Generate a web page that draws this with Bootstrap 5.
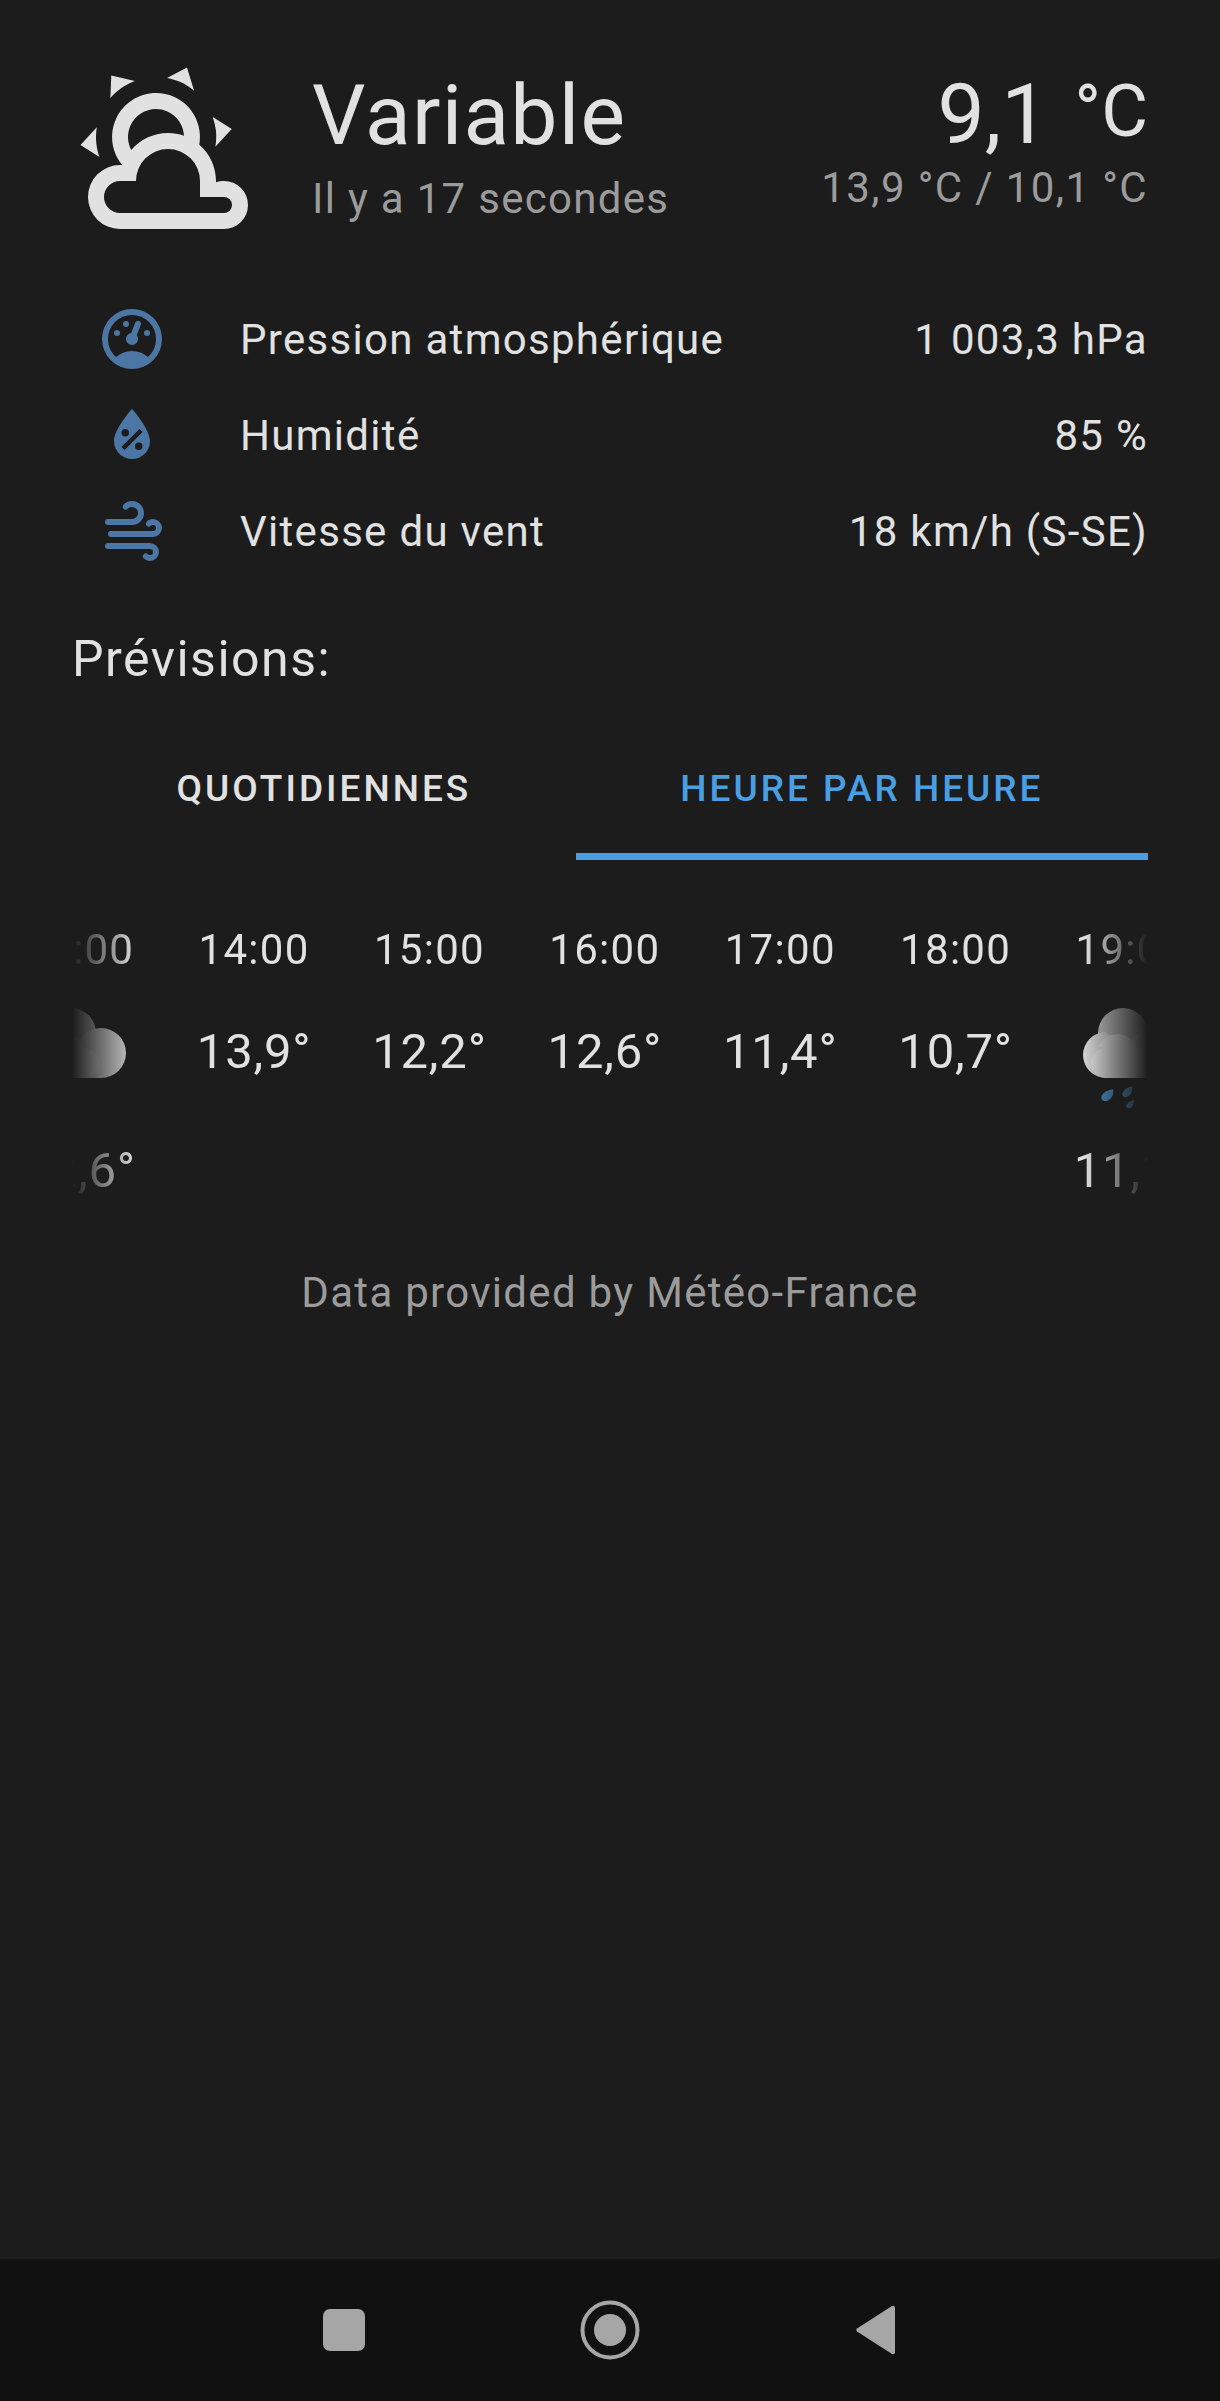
<!DOCTYPE html>
<html lang="fr">
<head>
  <meta charset="UTF-8" />
  <meta name="viewport" content="width=device-width, initial-scale=1.0">
  <title>Météo</title>
  <link href="https://cdn.jsdelivr.net/npm/bootstrap@5.3.3/dist/css/bootstrap.min.css" rel="stylesheet" />
  <style>
    body {
      background: #1c1c1c;
      color: #e1e1e1;
      font-family: Roboto, "Liberation Sans", sans-serif;
      min-height: 100vh;
    }

    .wx-head {
      padding: 53px 72px 0;
    }

    .wx-head-icon {
      width: 192px;
      height: 192px;
      fill: #e1e1e1;
      flex-shrink: 0;
      margin-right: 48px;
    }

    .wx-title {
      font-size: 84px;
      line-height: 88px;
      margin-top: 19px;
      letter-spacing: 1.3px;
    }

    .wx-temp {
      font-size: 84px;
      line-height: 88px;
      margin-top: 18px;
    }

    .wx-unit {
      font-size: 72px;
      line-height: 1;
      vertical-align: 7px;
      margin-left: 5px;
    }

    .wx-sub {
      font-size: 42px;
      line-height: 56px;
      color: #9b9b9b;
      letter-spacing: 1.3px;
      margin-top: 11px;
    }

    .wx-range {
      font-size: 42px;
      line-height: 56px;
      color: #9b9b9b;
      letter-spacing: 1.38px;
      margin-top: 1px;
    }

    .wx-attrs {
      padding: 46px 72px 0 96px;
    }

    .wx-attr {
      height: 96px;
      font-size: 42px;
      letter-spacing: 1.3px;
    }

    .wx-attr svg {
      width: 72px;
      height: 72px;
      fill: #4c76a4;
      margin-right: 72px;
    }

    .wx-forecast-title {
      font-size: 50px;
      line-height: 60px;
      margin: 50px 72px 0;
      letter-spacing: 1.5px;
    }

    .wx-tabs {
      margin: 40px 72px 0;
    }

    .wx-tabs .nav-link {
      height: 131px;
      line-height: 119px;
      padding: 0;
      font-size: 37px;
      font-weight: 500;
      letter-spacing: 3px;
      color: #e1e1e1;
      text-transform: uppercase;
      border-bottom: 7px solid transparent;
    }

    .wx-tabs .nav-link.active {
      color: #4a9fe3;
      border-bottom-color: #4a9fe3;
    }

    .wx-hours {
      margin: 62px 72px 0;
      overflow: hidden;
      -webkit-mask-image: linear-gradient(90deg, transparent 0, #000 64px, #000 1012px, transparent 100%);
      mask-image: linear-gradient(90deg, transparent 0, #000 64px, #000 1012px, transparent 100%);
    }

    .wx-strip {
      margin-left: -81px;
      width: 1228px;
    }

    .wx-hour {
      flex: 0 0 175.4px;
      text-align: center;
    }

    .wx-hour-time {
      font-size: 42px;
      line-height: 56px;
      letter-spacing: 1.3px;
    }

    .wx-hour-temp {
      font-size: 49px;
      line-height: 60px;
      letter-spacing: 0.8px;
      margin-top: 44px;
    }

    .wx-hour-icon {
      display: block;
      width: 96px;
      height: 102px;
      margin: 30px auto 0;
    }

    .wx-hour-icon + .wx-hour-temp {
      margin-top: 31px;
    }

    .wx-credit {
      font-size: 42px;
      line-height: 56px;
      letter-spacing: 1.3px;
      color: #9b9b9b;
      margin-top: 64px;
    }

    .wx-sysbar {
      height: 142px;
      background: #111111;
      gap: 206px;
    }

    .wx-sysbar svg {
      width: 60px;
      height: 60px;
      fill: #a6a6a6;
    }
  </style>
</head>
<body class="d-flex flex-column">

  <!-- current conditions -->
  <div class="wx-head d-flex">
    <svg class="wx-head-icon" viewBox="0 0 24 24"><path d="M12.74,5.47C15.1,6.5 16.35,9.03 15.92,11.46C17.19,12.56 18,14.19 18,16V16.17C18.31,16.06 18.65,16 19,16A3,3 0 0,1 22,19A3,3 0 0,1 19,22H6A4,4 0 0,1 2,18A4,4 0 0,1 6,14H6.27C5,12.45 4.6,10.24 5.5,8.26C6.72,5.5 9.97,4.24 12.74,5.47M11.93,7.3C10.16,6.5 8.09,7.31 7.31,9.07C6.85,10.09 6.93,11.22 7.41,12.13C8.5,10.83 10.16,10 12,10C12.7,10 13.38,10.12 14,10.34C13.94,9.06 13.18,7.86 11.93,7.3M13.55,3.64C13,3.4 12.45,3.23 11.88,3.12L14.37,1.82L15.27,4.71C14.76,4.29 14.19,3.93 13.55,3.64M6.09,4.44C5.6,4.79 5.17,5.19 4.8,5.63L4.91,2.82L7.87,3.5C7.25,3.71 6.65,4.03 6.09,4.44M18,9.71C17.91,9.12 17.78,8.55 17.59,8L19.97,9.5L17.92,11.73C18.03,11.08 18.05,10.4 18,9.71M3.04,11.3C3.11,11.9 3.24,12.47 3.43,13L1.06,11.5L3.1,9.28C3,9.93 2.97,10.61 3.04,11.3M19,18H16V16A4,4 0 0,0 12,12A4,4 0 0,0 8,16H6A2,2 0 0,0 4,18A2,2 0 0,0 6,20H19A1,1 0 0,0 20,19A1,1 0 0,0 19,18Z"/></svg>
    <div class="flex-grow-1">
      <div class="wx-title">Variable</div>
      <div class="wx-sub">Il y a 17 secondes</div>
    </div>
    <div class="text-end">
      <div class="wx-temp">9,1 <span class="wx-unit">°C</span></div>
      <div class="wx-range">13,9 °C / 10,1 °C</div>
    </div>
  </div>

  <!-- attributes -->
  <div class="wx-attrs">
    <div class="wx-attr d-flex align-items-center">
      <svg viewBox="0 0 24 24"><path d="M12,2A10,10 0 0,0 2,12A10,10 0 0,0 12,22A10,10 0 0,0 22,12A10,10 0 0,0 12,2M12,4A8,8 0 0,1 20,12C20,14.4 19,16.5 17.3,18C15.9,16.7 14,16 12,16C10,16 8.2,16.7 6.7,18C5,16.5 4,14.4 4,12A8,8 0 0,1 12,4M14,5.89C13.62,5.9 13.26,6.15 13.1,6.54L11.81,9.77L11.71,10C11,10.13 10.41,10.6 10.14,11.26C9.73,12.29 10.23,13.45 11.26,13.86C12.29,14.27 13.45,13.77 13.86,12.74C14.12,12.08 14,11.32 13.57,10.76L13.67,10.5L14.96,7.29L14.97,7.26C15.17,6.75 14.92,6.17 14.41,5.96C14.28,5.91 14.15,5.89 14,5.89M10,6A1,1 0 0,0 9,7A1,1 0 0,0 10,8A1,1 0 0,0 11,7A1,1 0 0,0 10,6M7,9A1,1 0 0,0 6,10A1,1 0 0,0 7,11A1,1 0 0,0 8,10A1,1 0 0,0 7,9M17,9A1,1 0 0,0 16,10A1,1 0 0,0 17,11A1,1 0 0,0 18,10A1,1 0 0,0 17,9Z"/></svg>
      <span class="flex-grow-1">Pression atmosphérique</span>
      <span>1 003,3 hPa</span>
    </div>
    <div class="wx-attr d-flex align-items-center">
      <svg viewBox="0 0 24 24"><path d="M12,3.25C12,3.25 6,10 6,14C6,17.32 8.69,20 12,20A6,6 0 0,0 18,14C18,10 12,3.25 12,3.25M14.47,9.97L15.53,11.03L9.53,17.03L8.47,15.97M9.75,10A1.25,1.25 0 0,1 11,11.25A1.25,1.25 0 0,1 9.75,12.5A1.25,1.25 0 0,1 8.5,11.25A1.25,1.25 0 0,1 9.75,10M14.25,14.5A1.25,1.25 0 0,1 15.5,15.75A1.25,1.25 0 0,1 14.25,17A1.25,1.25 0 0,1 13,15.75A1.25,1.25 0 0,1 14.25,14.5Z"/></svg>
      <span class="flex-grow-1">Humidité</span>
      <span>85 %</span>
    </div>
    <div class="wx-attr d-flex align-items-center">
      <svg viewBox="0 0 24 24"><path d="M4,10A1,1 0 0,1 3,9A1,1 0 0,1 4,8H12A2,2 0 0,0 14,6A2,2 0 0,0 12,4C11.45,4 10.95,4.22 10.59,4.59C10.2,5 9.56,5 9.17,4.59C8.78,4.2 8.78,3.56 9.17,3.17C9.9,2.45 10.9,2 12,2A4,4 0 0,1 16,6A4,4 0 0,1 12,10H4M19,12A1,1 0 0,0 20,11A1,1 0 0,0 19,10C18.72,10 18.47,10.11 18.29,10.29C17.9,10.68 17.27,10.68 16.88,10.29C16.5,9.9 16.5,9.27 16.88,8.88C17.42,8.34 18.17,8 19,8A3,3 0 0,1 22,11A3,3 0 0,1 19,14H5A1,1 0 0,1 4,13A1,1 0 0,1 5,12H19M18,18H4A1,1 0 0,1 3,17A1,1 0 0,1 4,16H18A3,3 0 0,1 21,19A3,3 0 0,1 18,22C17.17,22 16.42,21.66 15.88,21.12C15.5,20.73 15.5,20.1 15.88,19.71C16.27,19.32 16.9,19.32 17.29,19.71C17.47,19.89 17.72,20 18,20A1,1 0 0,0 19,19A1,1 0 0,0 18,18Z"/></svg>
      <span class="flex-grow-1">Vitesse du vent</span>
      <span>18 km/h (S-SE)</span>
    </div>
  </div>

  <div class="wx-forecast-title">Prévisions:</div>

  <ul class="nav nav-fill wx-tabs">
    <li class="nav-item"><a class="nav-link" href="#">Quotidiennes</a></li>
    <li class="nav-item"><a class="nav-link active" href="#">Heure par heure</a></li>
  </ul>

  <!-- hourly strip, scrolled a bit so both ends are cut off -->
  <div class="wx-hours">
    <div class="wx-strip d-flex">
      <div class="wx-hour">
        <div class="wx-hour-time">13:00</div>
        <svg class="wx-hour-icon" viewBox="0 0 96 102">
          <circle cx="40" cy="25" r="25" fill="#bcbcbc"/>
          <path fill="#d2d2d2" d="M23,24a23,23 0 0,0 0,46H70a25,25 0 0,0 0,-50a25,25 0 0,0 -25,25z"/>
          <path fill="#dedede" d="M23,40a15,15 0 0,0 0,30H52a15,15 0 0,0 2,-30a21,21 0 0,0 -39,-1z"/>
        </svg>
        <div class="wx-hour-temp">12,6°</div>
      </div>
      <div class="wx-hour">
        <div class="wx-hour-time">14:00</div>
        <div class="wx-hour-temp">13,9°</div>
      </div>
      <div class="wx-hour">
        <div class="wx-hour-time">15:00</div>
        <div class="wx-hour-temp">12,2°</div>
      </div>
      <div class="wx-hour">
        <div class="wx-hour-time">16:00</div>
        <div class="wx-hour-temp">12,6°</div>
      </div>
      <div class="wx-hour">
        <div class="wx-hour-time">17:00</div>
        <div class="wx-hour-temp">11,4°</div>
      </div>
      <div class="wx-hour">
        <div class="wx-hour-time">18:00</div>
        <div class="wx-hour-temp">10,7°</div>
      </div>
      <div class="wx-hour">
        <div class="wx-hour-time">19:00</div>
        <svg class="wx-hour-icon" viewBox="0 0 96 102">
          <circle cx="40" cy="25" r="25" fill="#bcbcbc"/>
          <path fill="#d2d2d2" d="M23,24a23,23 0 0,0 0,46H70a25,25 0 0,0 0,-50a25,25 0 0,0 -25,25z"/>
          <path fill="#dedede" d="M23,40a15,15 0 0,0 0,30H52a15,15 0 0,0 2,-30a21,21 0 0,0 -39,-1z"/>
          <path fill="#4a90c8" d="M30,81c1,5 -1,10 -6,12c-4,1 -7,-2 -5,-6c2,-3 6,-5 11,-6z"/>
          <path fill="#4a90c8" d="M49,78c1,5 -1,9 -5,11c-4,1 -6,-2 -4,-5c2,-3 5,-5 9,-6z"/>
          <path fill="#4a90c8" d="M51,92c0,4 -1,7 -4,8c-3,1 -5,-1 -3,-4c1,-2 4,-3 7,-4z"/>
        </svg>
        <div class="wx-hour-temp">11,1°</div>
      </div>
    </div>
  </div>

  <div class="wx-credit text-center">Data provided by Météo-France</div>

  <!-- android nav bar -->
  <div class="wx-sysbar mt-auto d-flex align-items-center justify-content-center">
    <svg viewBox="0 0 60 60"><rect x="9" y="9" width="42" height="42" rx="7"/></svg>
    <svg viewBox="0 0 60 60"><circle cx="30" cy="30" r="27.5" fill="none" stroke="#a6a6a6" stroke-width="4"/><circle cx="30" cy="30" r="16"/></svg>
    <svg viewBox="0 0 60 60"><path d="M49,7.5V52.5a2,2 0 0,1 -3,1.4L11,31.5a2,2 0 0,1 0,-3L46,6a2,2 0 0,1 3,1.5z"/></svg>
  </div>

  <script src="https://cdn.jsdelivr.net/npm/bootstrap@5.3.3/dist/js/bootstrap.bundle.min.js"></script>
</body>
</html>
